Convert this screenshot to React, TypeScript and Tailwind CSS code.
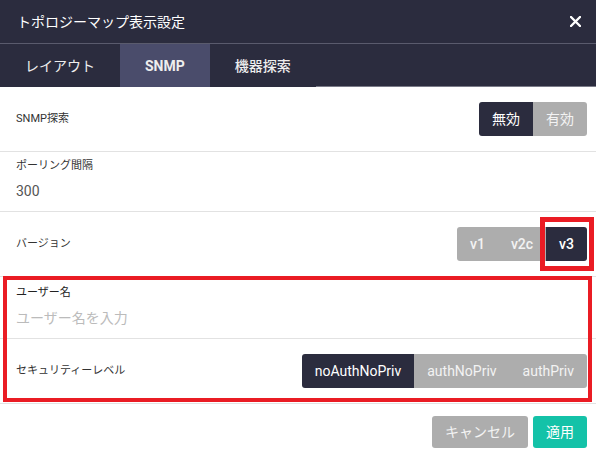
const font = "font-['Roboto','Noto_Sans_CJK_JP',sans-serif]";

interface SegProps {
  items: string[];
  active: number;
  bold?: boolean;
}

const Segmented = ({ items, active, bold }: SegProps) => {
  const weight = bold ? "font-medium" : "font-normal";
  return (
    <div className="flex h-[34px] overflow-hidden rounded-[3px]">
      {items.map((item, i) => (
        <button
          key={item}
          className={
            i === active
              ? `px-[13px] text-sm ${weight} text-white bg-[#2b2c3e]`
              : `px-[13px] text-sm ${weight} text-[#f3f3f3] bg-[#adadad]`
          }
        >
          {item}
        </button>
      ))}
    </div>
  );
};

const App = () => {
  return (
    <div className={`relative w-[596px] h-[458px] bg-white ${font}`}>
      {/* Header */}
      <div className="flex h-[44px] items-center justify-between bg-[#2b2c3e] pl-[17px] pr-[15px] border-b border-[#5a5b6d]">
        <h1 className="text-sm text-white">トポロジーマップ表示設定</h1>
        <svg width="11" height="11" viewBox="0 0 11 11" className="mt-[-1px]">
          <path d="M1 1L10 10M10 1L1 10" stroke="#ffffff" strokeWidth="2.4" strokeLinecap="round" />
        </svg>
      </div>

      {/* Tabs */}
      <div className="flex h-[43px] bg-[#2b2c3e]">
        <div className="flex items-center px-[25px] text-sm text-[#eeeeee]">レイアウト</div>
        <div className="flex items-center px-[25px] text-sm font-bold text-[#eeeeee] bg-[#4a4c6b]">SNMP</div>
        <div className="flex items-center px-[25px] text-sm font-medium text-[#eeeeee]">機器探索</div>
        <div className="flex-1 border-b border-[#7a7b88]" />
      </div>

      {/* SNMP探索 */}
      <div className="flex items-center justify-between pl-4 pr-[9px] py-[15px] border-b border-[#e2e2e2]">
        <span className="text-[11px] text-[#333333]">SNMP探索</span>
        <Segmented items={["無効", "有効"]} active={0} />
      </div>

      {/* ポーリング間隔 */}
      <div className="flex flex-col pl-4 pt-[6px] pb-[10px] border-b border-[#e2e2e2]">
        <span className="text-[11px] leading-4 text-[#333333]">ポーリング間隔</span>
        <span className="mt-[7px] text-sm leading-5 text-[#555555]">300</span>
      </div>

      {/* バージョン */}
      <div className="flex items-center justify-between pl-4 pr-[9px] py-[15px] border-b border-[#e2e2e2]">
        <span className="text-[11px] text-[#333333]">バージョン</span>
        <Segmented items={["v1", "v2c", "v3"]} active={2} bold />
      </div>

      {/* ユーザー名 */}
      <div className="flex flex-col pl-4 pt-[8px] pb-[10px] border-b border-[#e2e2e2]">
        <span className="text-[11px] leading-4 text-[#222222]">ユーザー名</span>
        <span className="mt-[7px] text-sm leading-5 text-[#bbbbbb]">ユーザー名を入力</span>
      </div>

      {/* セキュリティーレベル */}
      <div className="flex items-center justify-between pl-4 pr-[9px] py-[15px] border-b border-[#e2e2e2]">
        <span className="text-[11px] text-[#333333]">セキュリティーレベル</span>
        <Segmented items={["noAuthNoPriv", "authNoPriv", "authPriv"]} active={0} />
      </div>

      {/* Footer */}
      <div className="flex justify-end gap-[5px] pr-[9px] pt-[12px]">
        <button className="h-8 px-[13px] rounded-[3px] text-sm text-[#f3f3f3] bg-[#adadad]">キャンセル</button>
        <button className="h-8 px-[13px] rounded-[3px] text-sm text-white bg-[#14c2a8]">適用</button>
      </div>

      {/* Annotation boxes */}
      <div className="absolute left-[540px] top-[217px] w-[54px] h-[54px] border-[5px] border-[#ea1c24]" />
      <div className="absolute left-[3px] top-[276px] w-[589px] h-[126px] border-4 border-[#ea1c24]" />
    </div>
  );
};

export default App;
